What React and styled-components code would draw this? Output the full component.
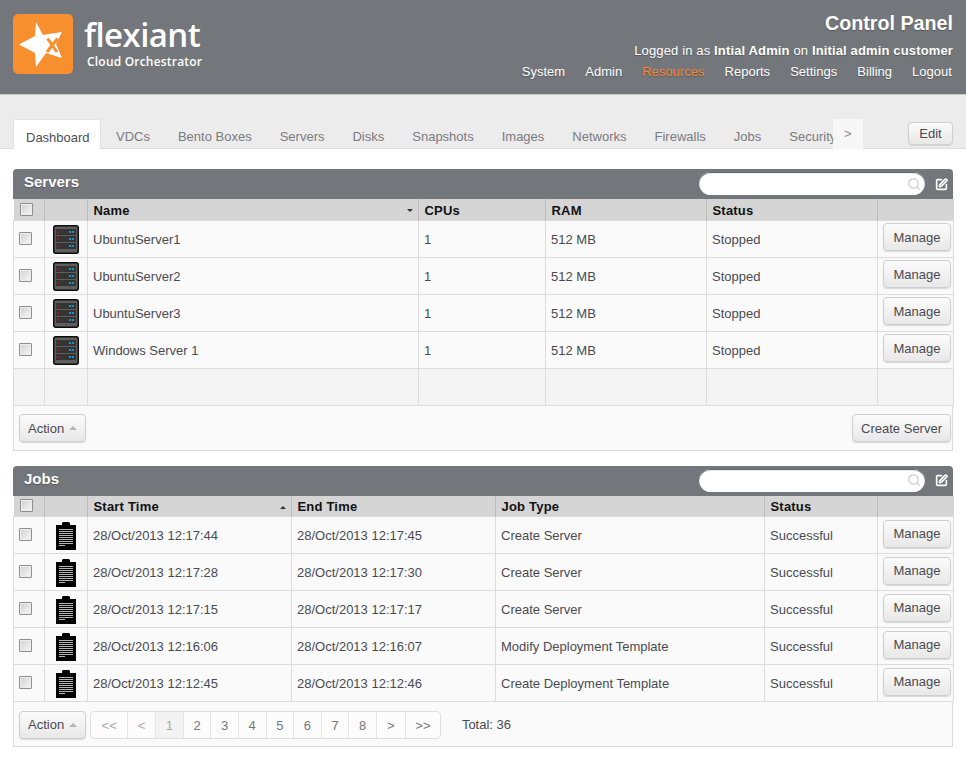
import React from 'react';
import styled, { createGlobalStyle } from 'styled-components';
import { Search, SquarePen } from 'lucide-react';

const GlobalStyle = createGlobalStyle`
  html, body {
    margin: 0;
    padding: 0;
    background: #fff;
    font-family: "Liberation Sans", Arial, sans-serif;
    font-size: 13px;
    color: #4a4a52;
  }
  * { box-sizing: border-box; }
`;

const Page = styled.div`
  width: 966px;
  height: 758px;
  overflow: hidden;
`;

const Header = styled.header`
  display: flex;
  justify-content: space-between;
  height: 95px;
  padding: 14px 13px 0;
  background: #73767a;
  border-bottom: 1px solid #c9c9c9;
  box-shadow: 0 1px 1px #dcdcdc;
`;

const Brand = styled.div`
  display: flex;
  gap: 11px;
`;

const LogoMark = styled.svg`
  display: block;
  width: 60px;
  height: 60px;
`;

const Wordmark = styled.div`
  display: flex;
  flex-direction: column;
  gap: 2px;
  padding-top: 3px;
  color: #fff;
  font-family: "Open Sans", sans-serif;
`;

const BrandName = styled.span`
  font-size: 33px;
  line-height: 36px;
  font-weight: 600;
  letter-spacing: -0.55px;
`;

const BrandSub = styled.span`
  font-size: 12px;
  line-height: 14px;
  font-weight: 600;
  margin-left: 3px;
  letter-spacing: 0.2px;
`;

const UserArea = styled.div`
  display: flex;
  flex-direction: column;
  align-items: flex-end;
  color: #fff;
  text-shadow: 0 1px 1px #55585c;
`;

const PanelTitle = styled.div`
  font-size: 19.7px;
  font-weight: bold;
  line-height: 20px;
  margin-top: -1px;
`;

const LoggedIn = styled.div`
  font-size: 13px;
  line-height: 16px;
  margin-top: 10px;
  letter-spacing: 0.14px;
  b { font-weight: bold; }
`;

const MainNav = styled.nav`
  display: flex;
  gap: 20px;
  margin-top: 5px;
  margin-right: 1px;
  line-height: 16px;
  letter-spacing: 0.02px;
`;

const NavLink = styled.span`
  color: ${(p) => (p.$active ? '#f58634' : '#fff')};
`;

const TabBar = styled.div`
  display: flex;
  align-items: flex-start;
  height: 54px;
  padding: 24px 13px 0;
  background: #ececec;
  border-bottom: 1px solid #dcdcdc;
`;

const TabViewport = styled.div`
  display: flex;
  flex: none;
  width: 823px;
  height: 30px;
  overflow: hidden;
`;

const Tab = styled.div`
  flex: none;
  height: 30px;
  line-height: 36px;
  padding: 0 14px;
  color: #7a7a80;
`;

const ActiveTab = styled(Tab)`
  width: 88px;
  margin-right: 1px;
  padding: 0 12px;
  line-height: 35px;
  color: #4d4d55;
  background: #fff;
  border: 1px solid #e2e2e2;
  border-bottom: 0;
  border-radius: 3px 3px 0 0;
`;

const ScrollTab = styled.div`
  flex: none;
  width: 30px;
  height: 30px;
  margin-left: -3px;
  padding-left: 11px;
  line-height: 30px;
  color: #8a8a8a;
  background: rgba(247, 247, 247, 0.92);
`;

const Button = styled.button`
  display: inline-flex;
  align-items: center;
  justify-content: center;
  gap: 5px;
  height: 28px;
  padding: 0 8px;
  font-family: inherit;
  font-size: 13px;
  color: #4a4a52;
  border: 1px solid #cfcfcf;
  border-radius: 4px;
  background: linear-gradient(#fbfbfb, #e8e8e8);
  box-shadow: 0 1px 1px #d8d8d8;
`;

const EditButton = styled(Button)`
  width: 45px;
  height: 23px;
  margin-left: auto;
  margin-top: 3px;
  padding: 0;
`;

const ManageButton = styled(Button)`
  width: 68px;
  padding: 0;
`;

const Content = styled.main`
  display: flex;
  flex-direction: column;
  gap: 15px;
  padding: 20px 13px 0;
`;

const Panel = styled.section`
  width: 940px;
`;

const PanelBar = styled.div`
  display: flex;
  align-items: center;
  height: 30px;
  padding-left: 11px;
  background: #73767a;
  border-radius: 4px 4px 0 0;
`;

const PanelName = styled.h2`
  margin: 0 auto 5px 0;
  font-size: 15px;
  font-weight: bold;
  color: #fff;
  text-shadow: 0 1px 1px #55585c;
`;

const SearchBox = styled.div`
  display: flex;
  align-items: center;
  justify-content: flex-end;
  width: 226px;
  height: 23px;
  margin-bottom: 1px;
  padding-right: 4px;
  background: #fff;
  border-radius: 12px;
  box-shadow: 0 1px 1px #55585c inset;
  color: #d4d4d4;
`;

const BarIcon = styled.span`
  display: flex;
  margin-left: 10px;
  margin-right: 5px;
  color: #fff;
`;

const Table = styled.table`
  width: 940px;
  table-layout: fixed;
  border-collapse: collapse;
`;

const HeadCell = styled.th`
  position: relative;
  height: 21px;
  padding: 2px 0 0 5.5px;
  text-align: left;
  font-size: 13px;
  font-weight: bold;
  letter-spacing: 0.2px;
  color: #111;
  background: #d5d5d5;
  border-left: 1px solid #bdbdbd;
  &:first-child { border-left: 0; padding-left: 6px; }
`;

const SortMark = styled.i`
  position: absolute;
  right: 5px;
  top: 10px;
  border-left: 3px solid transparent;
  border-right: 3px solid transparent;
  ${(p) => (p.$up ? 'border-bottom: 3px solid #333;' : 'border-top: 3px solid #333;')}
`;

const Row = styled.tr`
  height: 37px;
  background: ${(p) => (p.$blank ? '#f4f4f4' : '#fafafa')};
`;

const Cell = styled.td`
  padding: 1px 0 0 5px;
  color: #4a4a52;
  border: 1px solid #dcdcdc;
  white-space: nowrap;
`;

const IconCell = styled(Cell)`
  padding: 2px 0 0;
  svg { display: block; margin: 0 auto; }
`;

const ManageCell = styled(Cell)`
  padding: 0 0 3px 5px;
`;

const Check = styled.input.attrs({ type: 'checkbox' })`
  appearance: none;
  display: block;
  width: 13px;
  height: 13px;
  margin: 0 0 2px;
  border: 1px solid #8f8f8f;
  border-radius: 1px;
  background: linear-gradient(135deg, #d0d0d0, #f7f7f7);
  box-shadow: inset 0 0 0 1px #eee;
`;

const Footer = styled.div`
  display: flex;
  align-items: center;
  height: 45px;
  padding: 1px 1px 0 5px;
  background: #fafafa;
  border: 1px solid #dcdcdc;
  border-top: 0;
`;

const Caret = styled.i`
  border-left: 4px solid transparent;
  border-right: 4px solid transparent;
  border-bottom: 4px solid #b4b4b4;
`;

const Pager = styled.div`
  display: flex;
  height: 28px;
  margin-left: 4px;
  border: 1px solid #dedede;
  border-radius: 4px;
  background: #fcfcfc;
`;

const PageCell = styled.span`
  width: ${(p) => p.$w || 27.6}px;
  line-height: 27px;
  text-align: center;
  color: ${(p) => (p.$dim ? '#a8a8a8' : '#77777d')};
  background: ${(p) => (p.$current ? '#f3f3f3' : 'transparent')};
  border-left: 1px solid #e4e4e4;
  &:first-child { border-left: 0; }
`;

const Total = styled.span`
  margin-left: 21px;
`;

const Pusher = styled.span`
  margin-left: auto;
`;

const ServerIcon = () => (
  <svg width="26" height="29" viewBox="0 0 26 29">
    <rect x="0.75" y="0.75" width="24.5" height="27.5" rx="2" fill="#5e5e5e" stroke="#0c0c0c" strokeWidth="1.5" />
    {[6, 13, 20].map((y) => (
      <g key={y}>
        <rect x="3" y={y - 2} width="20" height="6" fill="#343434" />
        <rect x="4" y={y} width="2" height="2" fill="#9c1c24" />
        <rect x="16" y={y} width="2" height="2" fill="#1f8fc0" />
        <rect x="19" y={y} width="2" height="2" fill="#1f8fc0" />
      </g>
    ))}
  </svg>
);

const JobIcon = () => (
  <svg width="20" height="28" viewBox="0 0 20 28">
    <path d="M0 3h6V1L7 0h6l1 1v2h6v25H0z" fill="#000" />
    {[7, 9, 11, 13, 15, 17, 19, 21, 23].map((y) => (
      <rect key={y} x="3" y={y} width={y === 23 ? 6 : 14} height="1" fill="#b4b4b4" />
    ))}
  </svg>
);

const servers = ['UbuntuServer1', 'UbuntuServer2', 'UbuntuServer3', 'Windows Server 1'];

const jobs = [
  ['12:17:44', '12:17:45', 'Create Server'],
  ['12:17:28', '12:17:30', 'Create Server'],
  ['12:17:15', '12:17:17', 'Create Server'],
  ['12:16:06', '12:16:07', 'Modify Deployment Template'],
  ['12:12:45', '12:12:46', 'Create Deployment Template'],
];

const tabs = ['VDCs', 'Bento Boxes', 'Servers', 'Disks', 'Snapshots', 'Images', 'Networks', 'Firewalls', 'Jobs', 'Security'];
const navItems = ['System', 'Admin', 'Resources', 'Reports', 'Settings', 'Billing', 'Logout'];

const pages = [
  { label: '<<', w: 36, dim: true },
  { label: '<', w: 28, dim: true },
  { label: '1', current: true, dim: true },
  ...[2, 3, 4, 5, 6, 7, 8].map((n) => ({ label: String(n) })),
  { label: '>', w: 29 },
  { label: '>>', w: 35 },
];

const PanelHead = ({ title }) => (
  <PanelBar>
    <PanelName>{title}</PanelName>
    <SearchBox>
      <Search size={14} strokeWidth={2.5} />
    </SearchBox>
    <BarIcon>
      <SquarePen size={13} strokeWidth={3} />
    </BarIcon>
  </PanelBar>
);

const Columns = ({ widths }) => (
  <colgroup>
    {widths.map((w, i) => (
      <col key={i} width={w} />
    ))}
  </colgroup>
);

const Manage = () => (
  <ManageCell>
    <ManageButton>Manage</ManageButton>
  </ManageCell>
);

const App = () => (
  <Page>
    <GlobalStyle />
    <Header>
      <Brand>
        <LogoMark viewBox="0 0 60 60">
          <rect width="60" height="60" rx="5" fill="#f78f2e" />
          <path d="M23 8L30 21L49 18L43 30L49 44L33 39L23 53L22 39L6 30.500L22 22Z" fill="#fff" />
          <path d="M34.500 24.500L44 38M44.500 24.500L34 38" stroke="#f78f2e" strokeWidth="3" fill="none" />
        </LogoMark>
        <Wordmark>
          <BrandName>flexiant</BrandName>
          <BrandSub>Cloud Orchestrator</BrandSub>
        </Wordmark>
      </Brand>
      <UserArea>
        <PanelTitle>Control Panel</PanelTitle>
        <LoggedIn>
          Logged in as <b>Intial Admin</b> on <b>Initial admin customer</b>
        </LoggedIn>
        <MainNav>
          {navItems.map((item) => (
            <NavLink key={item} $active={item === 'Resources'}>{item}</NavLink>
          ))}
        </MainNav>
      </UserArea>
    </Header>

    <TabBar>
      <TabViewport>
        <ActiveTab>Dashboard</ActiveTab>
        {tabs.map((t) => (
          <Tab key={t}>{t}</Tab>
        ))}
      </TabViewport>
      <ScrollTab>&gt;</ScrollTab>
      <EditButton>Edit</EditButton>
    </TabBar>

    <Content>
      <Panel>
        <PanelHead title="Servers" />
        <Table>
          <Columns widths={[31, 43, 331, 127, 161, 171, 76]} />
          <thead>
            <tr>
              <HeadCell><Check /></HeadCell>
              <HeadCell />
              <HeadCell>Name<SortMark /></HeadCell>
              <HeadCell>CPUs</HeadCell>
              <HeadCell>RAM</HeadCell>
              <HeadCell>Status</HeadCell>
              <HeadCell />
            </tr>
          </thead>
          <tbody>
            {servers.map((name) => (
              <Row key={name}>
                <Cell><Check /></Cell>
                <IconCell><ServerIcon /></IconCell>
                <Cell>{name}</Cell>
                <Cell>1</Cell>
                <Cell>512 MB</Cell>
                <Cell>Stopped</Cell>
                <Manage />
              </Row>
            ))}
            <Row $blank>
              <Cell /><Cell /><Cell /><Cell /><Cell /><Cell /><Cell />
            </Row>
          </tbody>
        </Table>
        <Footer>
          <Button>Action <Caret /></Button>
          <Pusher />
          <Button>Create Server</Button>
        </Footer>
      </Panel>

      <Panel>
        <PanelHead title="Jobs" />
        <Table>
          <Columns widths={[31, 43, 204, 204, 269, 113, 76]} />
          <thead>
            <tr>
              <HeadCell><Check /></HeadCell>
              <HeadCell />
              <HeadCell>Start Time<SortMark $up /></HeadCell>
              <HeadCell>End Time</HeadCell>
              <HeadCell>Job Type</HeadCell>
              <HeadCell>Status</HeadCell>
              <HeadCell />
            </tr>
          </thead>
          <tbody>
            {jobs.map(([start, end, type]) => (
              <Row key={start}>
                <Cell><Check /></Cell>
                <IconCell><JobIcon /></IconCell>
                <Cell>28/Oct/2013 {start}</Cell>
                <Cell>28/Oct/2013 {end}</Cell>
                <Cell>{type}</Cell>
                <Cell>Successful</Cell>
                <Manage />
              </Row>
            ))}
          </tbody>
        </Table>
        <Footer>
          <Button>Action <Caret /></Button>
          <Pager>
            {pages.map((p) => (
              <PageCell key={p.label} $w={p.w} $dim={p.dim} $current={p.current}>{p.label}</PageCell>
            ))}
          </Pager>
          <Total>Total: 36</Total>
        </Footer>
      </Panel>
    </Content>
  </Page>
);

export default App;
